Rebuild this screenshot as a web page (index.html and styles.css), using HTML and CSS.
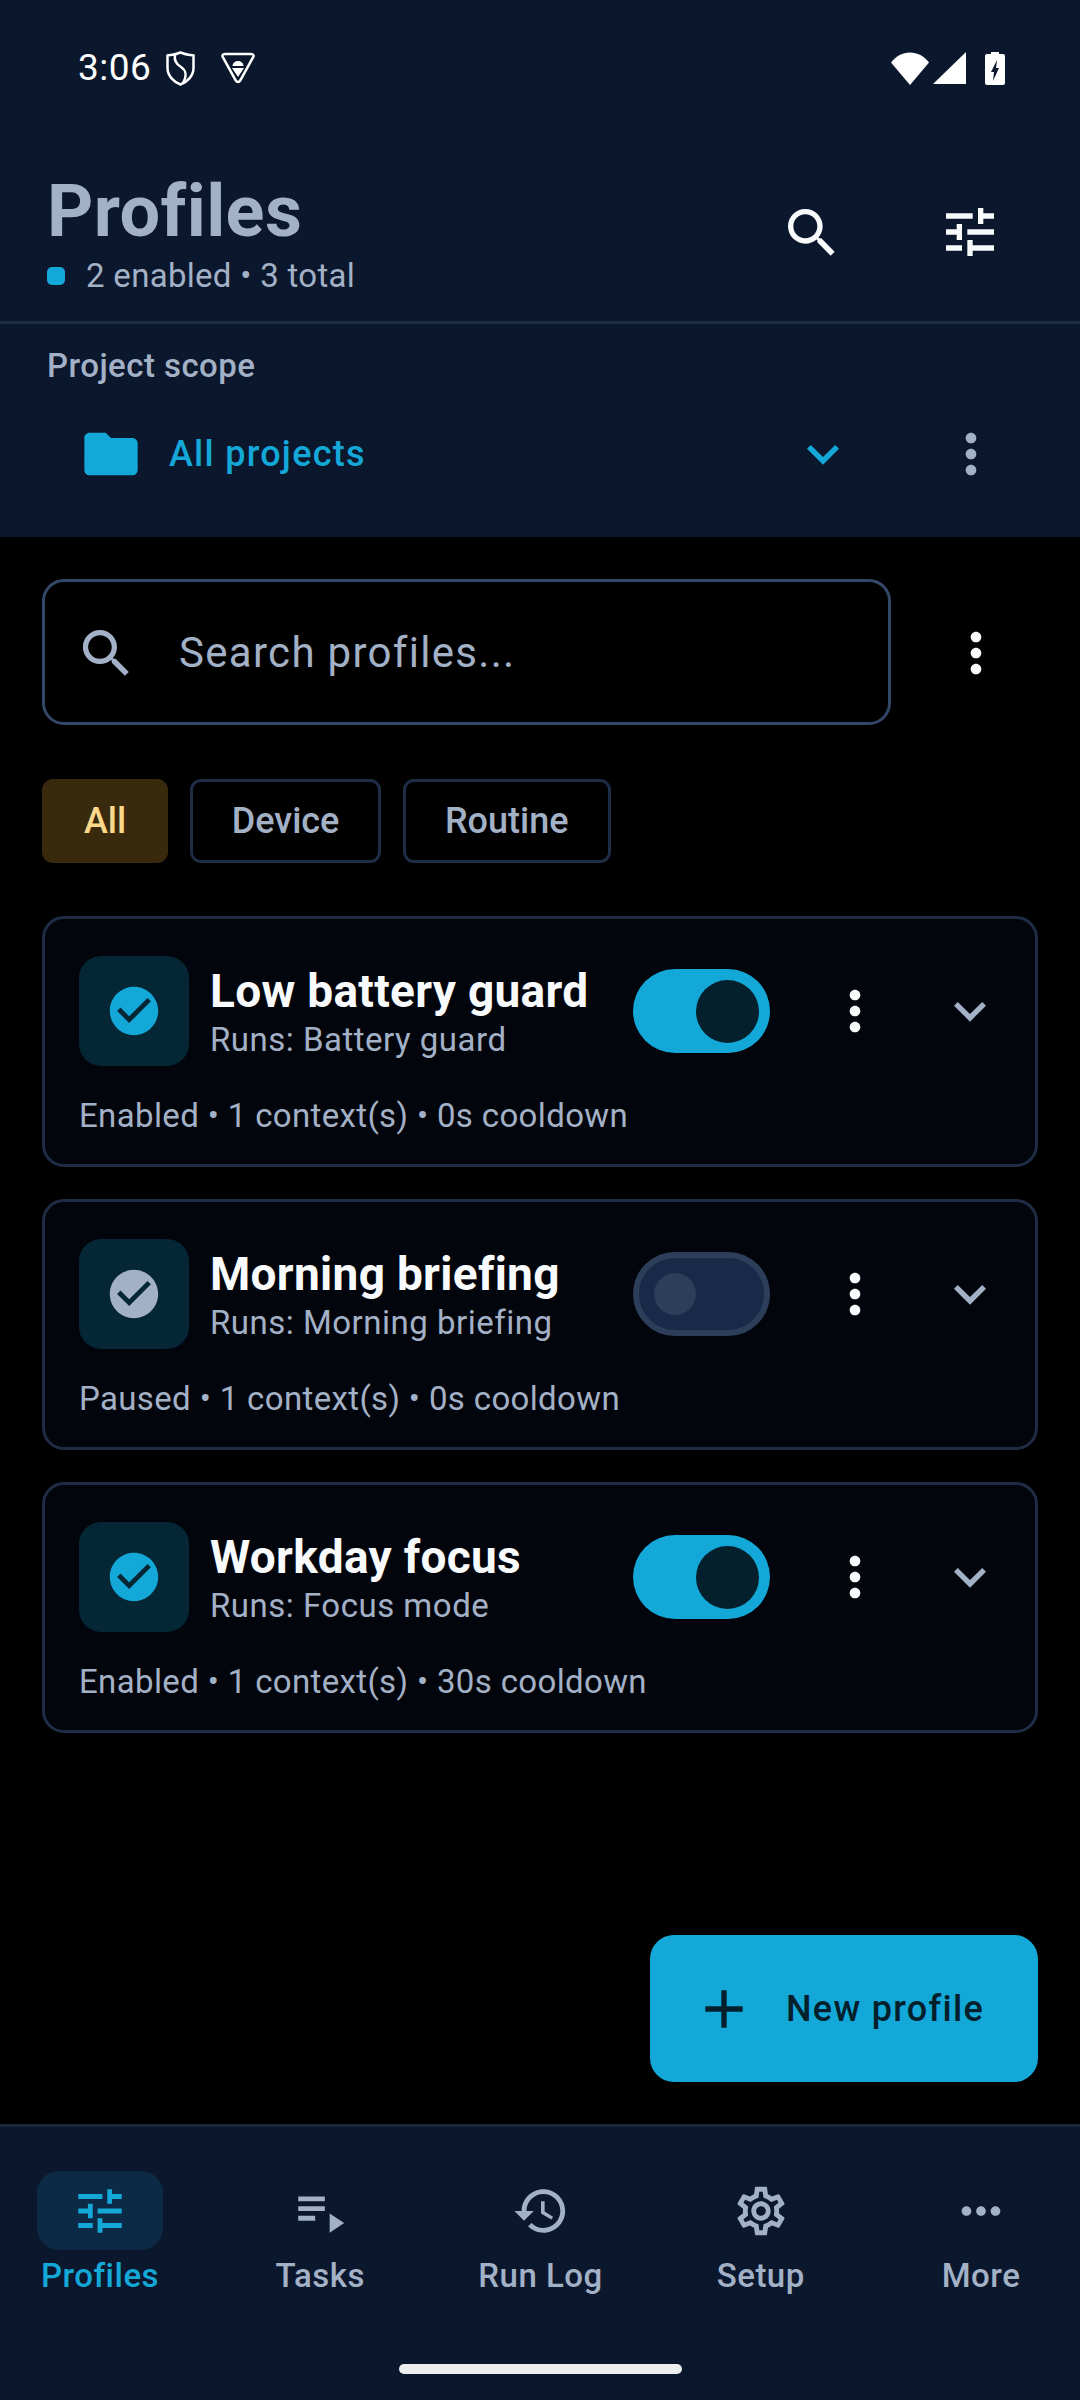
FILE: index.html
```html
<!DOCTYPE html>
<html lang="en">
<head>
    <meta charset="UTF-8">
    <meta name="viewport" content="width=device-width, initial-scale=1.0">
    <title>Profiles</title>
    <link rel="stylesheet" href="styles.css">
</head>
<body>
    <!-- icon sprite -->
    <svg class="sprite" xmlns="http://www.w3.org/2000/svg">
        <symbol id="i-search" viewBox="0 0 24 24"><path d="M15.5 14h-.79l-.28-.27C15.41 12.59 16 11.11 16 9.5 16 5.91 13.09 3 9.5 3S3 5.91 3 9.5 5.91 16 9.5 16c1.61 0 3.09-.59 4.23-1.57l.27.28v.79l5 4.99L20.49 19l-4.99-5zm-6 0C7.01 14 5 11.99 5 9.5S7.01 5 9.5 5 14 7.01 14 9.5 11.99 14 9.5 14z"/></symbol>
        <symbol id="i-tune" viewBox="0 0 24 24"><path d="M3 17v2h6v-2H3zM3 5v2h10V5H3zm10 16v-2h8v-2h-8v-2h-2v6h2zM7 9v2H3v2h4v2h2V9H7zm14 4v-2H11v2h10zm-6-4h2V7h4V5h-4V3h-2v6z"/></symbol>
        <symbol id="i-folder" viewBox="0 0 24 24"><path d="M10 4H4c-1.1 0-1.99.9-1.99 2L2 18c0 1.1.9 2 2 2h16c1.1 0 2-.9 2-2V8c0-1.1-.9-2-2-2h-8l-2-2z"/></symbol>
        <symbol id="i-chevron" viewBox="0 0 24 24"><path d="M16.59 8.59 12 13.17 7.41 8.59 6 10l6 6 6-6z"/></symbol>
        <symbol id="i-dots" viewBox="0 0 24 24"><path d="M12 8c1.1 0 2-.9 2-2s-.9-2-2-2-2 .9-2 2 .9 2 2 2zm0 2c-1.1 0-2 .9-2 2s.9 2 2 2 2-.9 2-2-.9-2-2-2zm0 6c-1.1 0-2 .9-2 2s.9 2 2 2 2-.9 2-2-.9-2-2-2z"/></symbol>
        <symbol id="i-check" viewBox="0 0 24 24"><path d="M12 2C6.48 2 2 6.48 2 12s4.48 10 10 10 10-4.48 10-10S17.52 2 12 2zm-2 15l-5-5 1.41-1.41L10 14.17l7.59-7.59L19 8l-9 9z"/></symbol>
        <symbol id="i-add" viewBox="0 0 24 24"><path d="M19 13h-6v6h-2v-6H5v-2h6V5h2v6h6v2z"/></symbol>
        <symbol id="i-tasks" viewBox="0 0 24 24"><path d="M3 10h11v2H3zm0-4h11v2H3zm0 8h7v2H3zm13-1v8l6-4z"/></symbol>
        <symbol id="i-history" viewBox="0 0 24 24"><path d="M13 3c-4.97 0-9 4.03-9 9H1l3.89 3.89.07.14L9 12H6c0-3.87 3.13-7 7-7s7 3.13 7 7-3.13 7-7 7c-1.93 0-3.68-.79-4.94-2.06l-1.42 1.42C8.27 19.99 10.51 21 13 21c4.97 0 9-4.03 9-9s-4.03-9-9-9zm-1 5v5l4.28 2.54.72-1.21-3.5-2.08V8H12z"/></symbol>
        <symbol id="i-settings" viewBox="0 0 24 24"><path d="M19.43 12.98c.04-.32.07-.64.07-.98 0-.34-.03-.66-.07-.98l2.11-1.65c.19-.15.24-.42.12-.64l-2-3.46c-.09-.16-.26-.25-.44-.25-.06 0-.12.01-.17.03l-2.49 1c-.52-.4-1.08-.73-1.69-.98l-.38-2.65C14.46 2.18 14.25 2 14 2h-4c-.25 0-.46.18-.49.42l-.38 2.65c-.61.25-1.17.59-1.69.98l-2.49-1c-.06-.02-.12-.03-.18-.03-.17 0-.34.09-.43.25l-2 3.46c-.13.22-.07.49.12.64l2.11 1.65c-.04.32-.07.65-.07.98 0 .33.03.66.07.98l-2.11 1.65c-.19.15-.24.42-.12.64l2 3.46c.09.16.26.25.44.25.06 0 .12-.01.17-.03l2.49-1c.52.4 1.08.73 1.69.98l.38 2.65c.03.24.24.42.49.42h4c.25 0 .46-.18.49-.42l.38-2.65c.61-.25 1.17-.59 1.69-.98l2.49 1c.06.02.12.03.18.03.17 0 .34-.09.43-.25l2-3.46c.12-.22.07-.49-.12-.64l-2.11-1.65zm-1.98-1.71c.04.31.05.52.05.73 0 .21-.02.43-.05.73l-.14 1.13.89.7 1.08.84-.7 1.21-1.27-.51-1.04-.42-.9.68c-.43.32-.84.56-1.25.73l-1.06.43-.16 1.13-.2 1.35h-1.4l-.19-1.35-.16-1.13-1.06-.43c-.43-.18-.83-.41-1.23-.71l-.91-.7-1.06.43-1.27.51-.7-1.21 1.08-.84.89-.7-.14-1.13c-.03-.31-.05-.54-.05-.74s.02-.43.05-.73l.14-1.13-.89-.7-1.08-.84.7-1.21 1.27.51 1.04.42.9-.68c.43-.32.84-.56 1.25-.73l1.06-.43.16-1.13.2-1.35h1.39l.19 1.35.16 1.13 1.06.43c.43.18.83.41 1.23.71l.91.7 1.06-.43 1.27-.51.7 1.21-1.07.85-.89.7.14 1.13zM12 8c-2.21 0-4 1.79-4 4s1.79 4 4 4 4-1.79 4-4-1.79-4-4-4zm0 6c-1.1 0-2-.9-2-2s.9-2 2-2 2 .9 2 2-.9 2-2 2z"/></symbol>
        <symbol id="i-more" viewBox="0 0 24 24"><path d="M6 10c-1.1 0-2 .9-2 2s.9 2 2 2 2-.9 2-2-.9-2-2-2zm12 0c-1.1 0-2 .9-2 2s.9 2 2 2 2-.9 2-2-.9-2-2-2zm-6 0c-1.1 0-2 .9-2 2s.9 2 2 2 2-.9 2-2-.9-2-2-2z"/></symbol>
    </svg>

    <div class="app">
        <!-- header -->
        <header class="top">
            <div class="statusbar">
                <span class="clock">3:06</span>
                <svg class="st-shield" viewBox="0 0 29 35"><path d="M14.5 1.5C19 3.5 24 4 27.5 4.5V17c0 8-6.5 14-13 16.5C8 31 1.5 25 1.5 17V4.5C5 4 10 3.5 14.5 1.5z"/><path d="M9 4c-1 5 1 9 6 12s6 9 2 16"/></svg>
                <svg class="st-droid" viewBox="0 0 34 32"><path class="st-line" d="M4 2h26c2.500 0 3.200 1.500 2 3.500L19.200 28.500c-1.200 2-3.200 2-4.400 0L2 5.500C.8 3.500 1.500 2 4 2z"/><path d="M11.500 14a5.500 5 0 0 1 11 0zM11 16h12l-6 9z"/></svg>
                <div class="st-right">
                    <svg class="st-wifi" viewBox="0 0 38 33"><path d="M0 10.500C5 4 11.500.5 19 .5s14 3.500 19 10L19 33z"/></svg>
                    <svg class="st-signal" viewBox="0 0 33 32"><path d="M33 0v32H0z"/></svg>
                    <svg class="st-battery" viewBox="0 0 20 33"><path fill-rule="evenodd" d="M6 0h8v2h4a2 2 0 0 1 2 2v27a2 2 0 0 1-2 2H2a2 2 0 0 1-2-2V4a2 2 0 0 1 2-2h4zM12 8 6 20h3l-1 9 6-13h-3z"/></svg>
                </div>
            </div>

            <div class="titlebar">
                <div class="titlebar-text">
                    <h1 class="page-title">Profiles</h1>
                    <div class="page-sub"><span class="page-dot"></span>2 enabled • 3 total</div>
                </div>
                <svg class="icon icon-white"><use href="#i-search"/></svg>
                <svg class="icon icon-white tune-btn"><use href="#i-tune"/></svg>
            </div>

            <div class="scope">
                <div class="scope-label">Project scope</div>
                <div class="scope-row">
                    <svg class="icon icon-blue"><use href="#i-folder"/></svg>
                    <span class="scope-name">All projects</span>
                    <svg class="icon icon-blue"><use href="#i-chevron"/></svg>
                    <svg class="icon icon-grey"><use href="#i-dots"/></svg>
                </div>
            </div>
        </header>

        <!-- list -->
        <main class="content">
            <div class="search-row">
                <div class="search-box">
                    <svg class="search-icon"><use href="#i-search"/></svg>
                    <span class="search-text">Search profiles...</span>
                </div>
                <svg class="icon icon-white search-more"><use href="#i-dots"/></svg>
            </div>

            <div class="chips">
                <span class="chip chip-on">All</span>
                <span class="chip">Device</span>
                <span class="chip">Routine</span>
            </div>

            <div class="cards">
                <div class="card">
                    <div class="card-top">
                        <div class="card-icon"><svg class="check check-on"><use href="#i-check"/></svg></div>
                        <div class="card-text">
                            <div class="card-title">Low battery guard</div>
                            <div class="card-sub">Runs: Battery guard</div>
                        </div>
                        <div class="toggle toggle-on"><span class="knob"></span></div>
                        <svg class="icon icon-white card-dots"><use href="#i-dots"/></svg>
                        <svg class="icon icon-grey"><use href="#i-chevron"/></svg>
                    </div>
                    <div class="card-meta">Enabled • 1 context(s) • 0s cooldown</div>
                </div>

                <div class="card">
                    <div class="card-top">
                        <div class="card-icon"><svg class="check check-off"><use href="#i-check"/></svg></div>
                        <div class="card-text">
                            <div class="card-title">Morning briefing</div>
                            <div class="card-sub">Runs: Morning briefing</div>
                        </div>
                        <div class="toggle"><span class="knob"></span></div>
                        <svg class="icon icon-white card-dots"><use href="#i-dots"/></svg>
                        <svg class="icon icon-grey"><use href="#i-chevron"/></svg>
                    </div>
                    <div class="card-meta">Paused • 1 context(s) • 0s cooldown</div>
                </div>

                <div class="card">
                    <div class="card-top">
                        <div class="card-icon"><svg class="check check-on"><use href="#i-check"/></svg></div>
                        <div class="card-text">
                            <div class="card-title">Workday focus</div>
                            <div class="card-sub">Runs: Focus mode</div>
                        </div>
                        <div class="toggle toggle-on"><span class="knob"></span></div>
                        <svg class="icon icon-white card-dots"><use href="#i-dots"/></svg>
                        <svg class="icon icon-grey"><use href="#i-chevron"/></svg>
                    </div>
                    <div class="card-meta">Enabled • 1 context(s) • 30s cooldown</div>
                </div>
            </div>

            <div class="fab">
                <svg class="icon"><use href="#i-add"/></svg>
                <span class="fab-text">New profile</span>
            </div>
        </main>

        <!-- bottom nav -->
        <nav class="nav">
            <div class="tabs">
                <div class="tab tab-on">
                    <div class="tab-pill"><svg class="tab-icon"><use href="#i-tune"/></svg></div>
                    <span class="tab-label">Profiles</span>
                </div>
                <div class="tab">
                    <div class="tab-pill"><svg class="tab-icon"><use href="#i-tasks"/></svg></div>
                    <span class="tab-label">Tasks</span>
                </div>
                <div class="tab">
                    <div class="tab-pill"><svg class="tab-icon"><use href="#i-history"/></svg></div>
                    <span class="tab-label">Run Log</span>
                </div>
                <div class="tab">
                    <div class="tab-pill"><svg class="tab-icon"><use href="#i-settings"/></svg></div>
                    <span class="tab-label">Setup</span>
                </div>
                <div class="tab">
                    <div class="tab-pill"><svg class="tab-icon"><use href="#i-more"/></svg></div>
                    <span class="tab-label">More</span>
                </div>
            </div>
            <div class="home-bar"></div>
        </nav>
    </div>
</body>
</html>
```

FILE: styles.css
```css
body, h1 {
    margin: 0;
    padding: 0;
}
body {
    background: #000;
    font-family: Roboto, "Liberation Sans", sans-serif;
    color: #a3b1c6;
}
.sprite {
    display: none;
}
.app {
    width: 1080px;
    height: 2400px;
    display: flex;
    flex-direction: column;
    overflow: hidden;
}

/* icons */
.icon {
    width: 64px;
    height: 64px;
    flex: none;
    fill: currentColor;
}
.icon-white { color: #f8fafc; }
.icon-blue { color: #14a8d8; }
.icon-grey { color: #a3b1c6; }

/* header */
.top {
    background: #0b172d;
    height: 537px;
    flex: none;
}
.statusbar {
    height: 136px;
    padding: 0 75px 0 78px;
    box-sizing: border-box;
    display: flex;
    align-items: center;
    color: #fff;
}
.clock {
    width: 88px;
    font-size: 37px;
    line-height: 44px;
    letter-spacing: .5px;
}
.statusbar svg {
    fill: #fff;
    flex: none;
}
.st-shield {
    width: 29px;
    height: 35px;
}
.st-shield path {
    fill: none;
    stroke: #fff;
    stroke-width: 2.5;
}
.st-droid {
    width: 34px;
    height: 32px;
    margin-left: 26px;
}
.statusbar .st-line {
    fill: none;
    stroke: #fff;
    stroke-width: 2.5;
}
.st-right {
    margin-left: auto;
    display: flex;
    align-items: center;
}
.st-wifi {
    width: 38px;
    height: 33px;
}
.st-signal {
    width: 33px;
    height: 32px;
    margin-left: 4px;
}
.st-battery {
    width: 20px;
    height: 33px;
    margin-left: 19px;
}

.titlebar {
    height: 188px;
    padding: 36px 78px 0 47px;
    box-sizing: border-box;
    border-bottom: 3px solid #1c2c45;
    display: flex;
    align-items: flex-start;
}
.titlebar .icon {
    margin-top: 29px;
    margin-left: 94px;
}
.titlebar .tune-btn {
    margin-top: 28px;
}
.titlebar-text {
    flex: 1;
}
.page-title {
    font-size: 72px;
    line-height: 80px;
    font-weight: 700;
    letter-spacing: .4px;
}
.page-sub {
    margin-top: 2px;
    font-size: 33px;
    line-height: 44px;
    letter-spacing: .3px;
    display: flex;
    align-items: center;
}
.page-dot {
    width: 18px;
    height: 18px;
    margin-right: 21px;
    border-radius: 5px;
    background: #14a8d8;
}

.scope {
    padding-top: 20px;
}
.scope-label {
    padding-left: 47px;
    font-size: 33px;
    line-height: 44px;
    font-weight: 500;
    letter-spacing: .45px;
}
.scope-row {
    margin-top: 34px;
    padding: 0 77px 0 79px;
    display: flex;
    align-items: center;
}
.scope-name {
    flex: 1;
    margin-left: 26px;
    font-size: 36px;
    font-weight: 500;
    letter-spacing: 1.25px;
    color: #14a8d8;
}
.scope-row .icon:last-child {
    margin-left: 84px;
}

/* list */
.content {
    flex: 1;
    position: relative;
    padding: 42px 42px 0;
}
.search-row {
    display: flex;
    align-items: center;
}
.search-box {
    flex: 1;
    height: 146px;
    box-sizing: border-box;
    border: 3px solid #334766;
    border-radius: 22px;
    padding-left: 30px;
    display: flex;
    align-items: center;
}
.search-icon {
    width: 63px;
    height: 63px;
    margin-top: 2px;
    fill: currentColor;
}
.search-text {
    margin: 1px 0 0 41px;
    font-size: 42px;
    letter-spacing: 1.3px;
}
.search-more {
    margin: 2px 30px 0 53px;
}
.chips {
    margin-top: 54px;
    display: flex;
    gap: 21.5px;
}
.chip {
    height: 84px;
    box-sizing: border-box;
    padding: 0 39px;
    border: 3px solid #1e2d45;
    border-radius: 11px;
    font-size: 36px;
    line-height: 78px;
    font-weight: 500;
}
.chip-on {
    background: #392a0e;
    border-color: #392a0e;
    color: #fcd88a;
}
.cards {
    margin-top: 53px;
    display: flex;
    flex-direction: column;
    gap: 32px;
}
.card {
    height: 251px;
    box-sizing: border-box;
    border: 3px solid #1e2d45;
    border-radius: 22px;
    background: #03050c;
    padding: 37px 33.5px 0 34px;
}
.card-top {
    display: flex;
    align-items: center;
    height: 110px;
}
.card-icon {
    width: 110px;
    height: 110px;
    flex: none;
    border-radius: 22px;
    background: #052635;
    display: flex;
    align-items: center;
    justify-content: center;
}
.check {
    width: 58px;
    height: 58px;
}
.check-on { fill: #14a8d8; }
.check-off { fill: #a3b1c6; }
.card-text {
    flex: 1;
    margin-left: 21px;
    margin-top: 2px;
}
.card-title {
    font-size: 46px;
    line-height: 54px;
    font-weight: 700;
    letter-spacing: .3px;
    color: #f8fafc;
}
.card-sub {
    margin-top: 2px;
    font-size: 33px;
    line-height: 40px;
    letter-spacing: .5px;
}
.toggle {
    width: 137px;
    height: 84px;
    flex: none;
    box-sizing: border-box;
    border: 6px solid #2d3e5a;
    border-radius: 42px;
    background: #172a48;
    padding-left: 15px;
    display: flex;
    align-items: center;
}
.knob {
    width: 42px;
    height: 42px;
    border-radius: 50%;
    background: #2d3e5a;
}
.toggle-on {
    border: 0;
    background: #14a8d8;
    padding-left: 63px;
}
.toggle-on .knob {
    width: 63px;
    height: 63px;
    background: #03202c;
}
.card-dots {
    margin: 0 51px 0 52.5px;
}
.card-meta {
    margin-top: 28px;
    font-size: 33px;
    line-height: 44px;
    letter-spacing: .36px;
}
.fab {
    position: absolute;
    left: 650px;
    top: 1398px;
    width: 388px;
    height: 147px;
    box-sizing: border-box;
    padding-left: 42px;
    border-radius: 24px;
    background: #14a8d8;
    color: #03202c;
    display: flex;
    align-items: center;
}
.fab-text {
    margin-left: 30px;
    font-size: 36px;
    font-weight: 500;
    letter-spacing: 1.3px;
}

/* bottom nav */
.nav {
    height: 276px;
    flex: none;
    box-sizing: border-box;
    border-top: 3px solid #1a283d;
    background: #0b172d;
    padding-top: 44px;
    display: flex;
    flex-direction: column;
}
.tabs {
    padding: 0 36px 0 37px;
    display: flex;
    justify-content: space-between;
}
.tab {
    width: 126px;
    display: flex;
    flex-direction: column;
    align-items: center;
}
.tab-pill {
    width: 126px;
    height: 79px;
    border-radius: 22px;
    display: flex;
    align-items: center;
    justify-content: center;
}
.tab-icon {
    width: 58px;
    height: 58px;
    fill: currentColor;
}
.tab-label {
    margin-top: 4px;
    font-size: 33px;
    line-height: 44px;
    font-weight: 500;
    letter-spacing: .5px;
    white-space: nowrap;
}
.tab-on {
    color: #14a8d8;
}
.tab-on .tab-pill {
    background: #0c2a45;
}
.home-bar {
    width: 283px;
    height: 10px;
    margin: auto auto 26px;
    border-radius: 5px;
    background: #eceef0;
}
```
